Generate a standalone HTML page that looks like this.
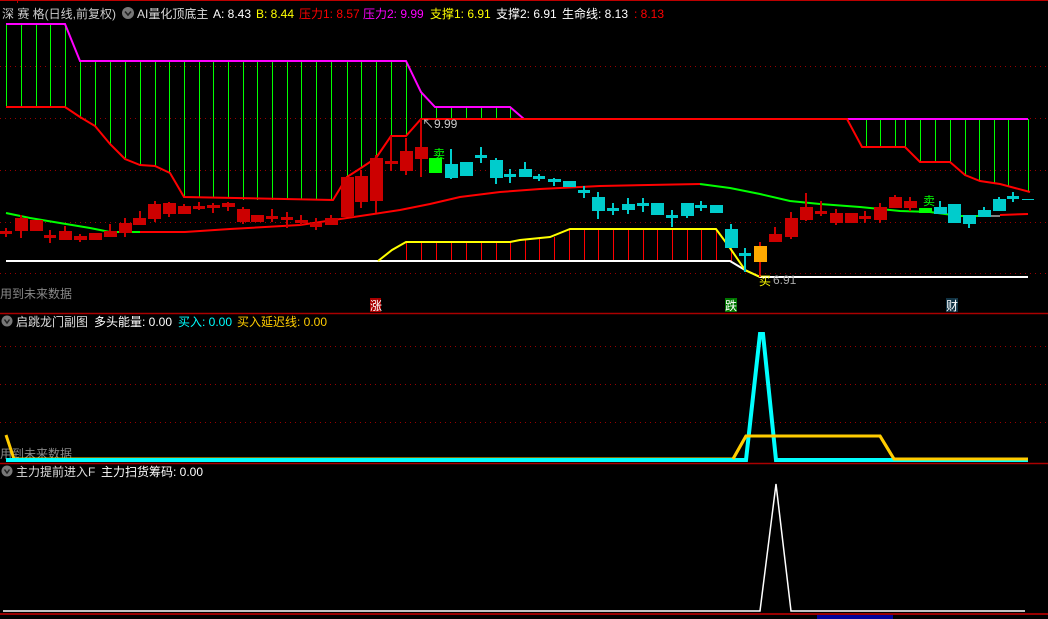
<!DOCTYPE html>
<html><head><meta charset="utf-8"><style>
html,body{margin:0;padding:0;background:#000;width:1048px;height:619px;overflow:hidden}
svg{display:block}
text{font-family:"Liberation Sans","Noto Sans CJK SC",sans-serif;font-size:12px}
</style></head><body>
<svg width="1048" height="619" xmlns="http://www.w3.org/2000/svg">
<rect width="1048" height="619" fill="#000"/>
<line x1="0" y1="0.5" x2="1048" y2="0.5" stroke="#b00" />
<line x1="17.5" y1="0" x2="17.5" y2="3" stroke="#b00"/>
<!-- grid -->
<g stroke="#900" stroke-dasharray="1,4">
<line x1="0" y1="66.5" x2="1048" y2="66.5"/><line x1="0" y1="118.5" x2="1048" y2="118.5"/>
<line x1="0" y1="170.5" x2="1048" y2="170.5"/><line x1="0" y1="222.5" x2="1048" y2="222.5"/>
<line x1="0" y1="273.5" x2="1048" y2="273.5"/>
<line x1="0" y1="346.5" x2="1048" y2="346.5"/><line x1="0" y1="384.5" x2="1048" y2="384.5"/><line x1="0" y1="422.5" x2="1048" y2="422.5"/>
</g>
<!-- green verticals -->
<g stroke="#0f0" stroke-width="1">
<line x1="6.5" y1="24" x2="6.5" y2="107"/><line x1="21.5" y1="24" x2="21.5" y2="107"/><line x1="36.5" y1="24" x2="36.5" y2="107"/><line x1="50.5" y1="24" x2="50.5" y2="107"/><line x1="65.5" y1="24" x2="65.5" y2="107"/>
<line x1="80.5" y1="61" x2="80.5" y2="117"/><line x1="95.5" y1="61" x2="95.5" y2="127"/><line x1="110.5" y1="61" x2="110.5" y2="144"/><line x1="125.5" y1="61" x2="125.5" y2="158"/><line x1="140.5" y1="61" x2="140.5" y2="165"/><line x1="155.5" y1="61" x2="155.5" y2="166"/><line x1="169.5" y1="61" x2="169.5" y2="172"/><line x1="184.5" y1="61" x2="184.5" y2="197"/><line x1="199.5" y1="61" x2="199.5" y2="197"/><line x1="213.5" y1="61" x2="213.5" y2="198"/><line x1="228.5" y1="61" x2="228.5" y2="198"/><line x1="243.5" y1="61" x2="243.5" y2="200"/><line x1="257.5" y1="61" x2="257.5" y2="200"/><line x1="272.5" y1="61" x2="272.5" y2="200"/><line x1="287.5" y1="61" x2="287.5" y2="200"/><line x1="301.5" y1="61" x2="301.5" y2="200"/><line x1="316.5" y1="61" x2="316.5" y2="200"/><line x1="331.5" y1="61" x2="331.5" y2="200"/><line x1="347.5" y1="61" x2="347.5" y2="177"/><line x1="361.5" y1="61" x2="361.5" y2="168"/><line x1="376.5" y1="61" x2="376.5" y2="158"/><line x1="391.5" y1="61" x2="391.5" y2="136"/><line x1="406.5" y1="61" x2="406.5" y2="136"/><line x1="421.5" y1="92" x2="421.5" y2="119"/>
<line x1="436.5" y1="107" x2="436.5" y2="119"/><line x1="451.5" y1="107" x2="451.5" y2="119"/><line x1="466.5" y1="107" x2="466.5" y2="119"/><line x1="481.5" y1="107" x2="481.5" y2="119"/><line x1="496.5" y1="107" x2="496.5" y2="119"/><line x1="510.5" y1="107" x2="510.5" y2="119"/>
<line x1="866.5" y1="119" x2="866.5" y2="147"/><line x1="880.5" y1="119" x2="880.5" y2="147"/><line x1="895.5" y1="119" x2="895.5" y2="147"/><line x1="905.5" y1="119" x2="905.5" y2="147"/><line x1="920.5" y1="119" x2="920.5" y2="162"/><line x1="935.5" y1="119" x2="935.5" y2="162"/><line x1="950.5" y1="119" x2="950.5" y2="162"/><line x1="965.5" y1="119" x2="965.5" y2="175"/><line x1="979.5" y1="119" x2="979.5" y2="181"/><line x1="994.5" y1="119" x2="994.5" y2="184"/><line x1="1008.5" y1="119" x2="1008.5" y2="187"/><line x1="1028.5" y1="119" x2="1028.5" y2="192"/>
</g>
<polyline fill="none" stroke="#f0f" stroke-width="2" points="6,24 65,24 80,61 406,61 421,92 435,107 510,107 524,119 1028,119"/>
<polyline fill="none" stroke="#f00" stroke-width="2" points="6,107 65,107 80,117 95,126 110,144 125,159 140,165 155,166 170,173 184,197 333,200 347,177 361,168 376,158 391,136 406,136 421,119 847,119 862,147 905,147 920,162 950,162 965,175 980,181 1000,184 1030,192"/>
<!-- support lines -->
<g stroke="#f00" stroke-width="1">
<line x1="406.5" y1="242" x2="406.5" y2="261"/><line x1="421.5" y1="242" x2="421.5" y2="261"/><line x1="436.5" y1="242" x2="436.5" y2="261"/><line x1="451.5" y1="242" x2="451.5" y2="261"/><line x1="466.5" y1="242" x2="466.5" y2="261"/><line x1="481.5" y1="242" x2="481.5" y2="261"/><line x1="496.5" y1="242" x2="496.5" y2="261"/><line x1="510.5" y1="242" x2="510.5" y2="261"/><line x1="525.5" y1="240" x2="525.5" y2="261"/><line x1="539.5" y1="238" x2="539.5" y2="261"/><line x1="554.5" y1="237" x2="554.5" y2="261"/><line x1="569.5" y1="229" x2="569.5" y2="261"/><line x1="584.5" y1="229" x2="584.5" y2="261"/><line x1="598.5" y1="229" x2="598.5" y2="261"/><line x1="613.5" y1="229" x2="613.5" y2="261"/><line x1="628.5" y1="229" x2="628.5" y2="261"/><line x1="643.5" y1="229" x2="643.5" y2="261"/><line x1="657.5" y1="229" x2="657.5" y2="261"/><line x1="672.5" y1="229" x2="672.5" y2="261"/><line x1="687.5" y1="229" x2="687.5" y2="261"/><line x1="701.5" y1="229" x2="701.5" y2="261"/><line x1="716.5" y1="229" x2="716.5" y2="261"/><line x1="731.5" y1="248" x2="731.5" y2="261"/>
</g>
<polyline fill="none" stroke="#fff" stroke-width="2" points="6,261 730,261 745,270 760,277 1028,277"/>
<polyline fill="none" stroke="#ff0" stroke-width="2" points="378,261 392,250 406,242 510,242 520,240 550,237 570,229 716,229 730,248 745,270 760,277"/>
<!-- MA line -->
<polyline fill="none" stroke="#0f0" stroke-width="2" points="6,213 30,218 60,223 90,228 110,232 140,232"/>
<polyline fill="none" stroke="#f00" stroke-width="2" points="140,232 185,232 230,229 300,225 347,218 400,210 430,204 460,197 500,192 540,189 600,186 700,184"/>
<polyline fill="none" stroke="#0f0" stroke-width="2" points="700,184 730,188 760,194 790,201 820,204 860,207 900,211 930,212 960,216 985,216"/>
<polyline fill="none" stroke="#f00" stroke-width="2" points="1000,215 1028,214"/>
<line x1="985" y1="216" x2="1000" y2="216" stroke="#fff" stroke-width="1"/>
<!-- candles -->
<g fill="#c00" stroke="#c00" stroke-width="2">
<line x1="6" y1="228" x2="6" y2="237"/><line x1="21" y1="215" x2="21" y2="238"/><line x1="50" y1="230" x2="50" y2="243"/><line x1="65" y1="226" x2="65" y2="240"/><line x1="80" y1="234" x2="80" y2="242"/><line x1="110" y1="224" x2="110" y2="237"/><line x1="125" y1="218" x2="125" y2="237"/><line x1="140" y1="211" x2="140" y2="225"/><line x1="155" y1="201" x2="155" y2="222"/><line x1="169" y1="202" x2="169" y2="217"/><line x1="184" y1="204" x2="184" y2="214"/><line x1="199" y1="202" x2="199" y2="210"/><line x1="213" y1="203" x2="213" y2="213"/><line x1="228" y1="202" x2="228" y2="211"/><line x1="243" y1="207" x2="243" y2="224"/><line x1="272" y1="209" x2="272" y2="222"/><line x1="287" y1="212" x2="287" y2="228"/><line x1="301" y1="215" x2="301" y2="225"/><line x1="316" y1="218" x2="316" y2="230"/><line x1="331" y1="215" x2="331" y2="225"/><line x1="361" y1="170" x2="361" y2="208"/><line x1="376" y1="155" x2="376" y2="213"/><line x1="391" y1="136" x2="391" y2="171"/><line x1="406" y1="138" x2="406" y2="175"/><line x1="421" y1="119" x2="421" y2="177"/>
<line x1="760" y1="242" x2="760" y2="277"/><line x1="775" y1="227" x2="775" y2="242"/><line x1="791" y1="212" x2="791" y2="239"/><line x1="806" y1="193" x2="806" y2="221"/><line x1="821" y1="201" x2="821" y2="216"/><line x1="836" y1="209" x2="836" y2="225"/><line x1="865" y1="211" x2="865" y2="223"/><line x1="880" y1="203" x2="880" y2="223"/><line x1="895" y1="195" x2="895" y2="208"/><line x1="910" y1="197" x2="910" y2="211"/>
</g>
<g fill="#c00">
<rect x="0" y="231" width="12" height="3"/><rect x="15" y="218" width="13" height="13"/><rect x="30" y="220" width="13" height="11"/><rect x="44" y="235" width="12" height="3"/><rect x="59" y="231" width="13" height="9"/><rect x="74" y="236" width="13" height="4"/><rect x="89" y="233" width="13" height="7"/><rect x="104" y="231" width="13" height="6"/><rect x="119" y="223" width="13" height="10"/><rect x="133" y="218" width="13" height="7"/><rect x="148" y="204" width="13" height="15"/><rect x="163" y="203" width="13" height="11"/><rect x="178" y="206" width="13" height="8"/><rect x="193" y="206" width="12" height="3"/><rect x="207" y="205" width="13" height="3"/><rect x="222" y="203" width="13" height="4"/><rect x="237" y="209" width="13" height="13"/><rect x="251" y="215" width="13" height="7"/><rect x="266" y="216" width="12" height="3"/><rect x="281" y="217" width="12" height="3"/><rect x="295" y="220" width="13" height="3"/><rect x="310" y="223" width="12" height="4"/><rect x="325" y="218" width="13" height="7"/><rect x="341" y="177" width="13" height="40"/><rect x="355" y="176" width="13" height="26"/><rect x="370" y="158" width="13" height="43"/><rect x="385" y="161" width="13" height="3"/><rect x="400" y="151" width="13" height="20"/><rect x="415" y="147" width="13" height="12"/>
<rect x="769" y="234" width="13" height="8"/><rect x="785" y="218" width="13" height="19"/><rect x="800" y="207" width="13" height="13"/><rect x="815" y="211" width="12" height="3"/><rect x="830" y="213" width="13" height="10"/><rect x="845" y="213" width="13" height="10"/><rect x="859" y="216" width="12" height="3"/><rect x="874" y="207" width="13" height="13"/><rect x="889" y="197" width="13" height="11"/><rect x="904" y="201" width="13" height="7"/>
</g>
<rect x="754" y="246" width="13" height="16" fill="#fa0"/>
<g fill="#0f0"><rect x="429" y="158" width="13" height="15"/><rect x="919" y="208" width="13" height="5"/></g>
<g stroke="#0cc" stroke-width="2">
<line x1="451" y1="149" x2="451" y2="179"/><line x1="481" y1="147" x2="481" y2="163"/><line x1="496" y1="158" x2="496" y2="184"/><line x1="510" y1="169" x2="510" y2="183"/><line x1="525" y1="162" x2="525" y2="177"/><line x1="539" y1="174" x2="539" y2="181"/><line x1="554" y1="178" x2="554" y2="186"/><line x1="584" y1="186" x2="584" y2="198"/><line x1="598" y1="192" x2="598" y2="219"/><line x1="613" y1="203" x2="613" y2="215"/><line x1="628" y1="198" x2="628" y2="214"/><line x1="643" y1="198" x2="643" y2="212"/><line x1="672" y1="210" x2="672" y2="227"/><line x1="687" y1="203" x2="687" y2="218"/><line x1="701" y1="201" x2="701" y2="211"/><line x1="731" y1="224" x2="731" y2="248"/><line x1="745" y1="248" x2="745" y2="272"/><line x1="940" y1="201" x2="940" y2="214"/><line x1="969" y1="215" x2="969" y2="228"/><line x1="984" y1="207" x2="984" y2="217"/><line x1="999" y1="197" x2="999" y2="211"/><line x1="1013" y1="192" x2="1013" y2="202"/>
</g>
<g fill="#0cc">
<rect x="445" y="164" width="13" height="14"/><rect x="460" y="162" width="13" height="14"/><rect x="475" y="155" width="12" height="3"/><rect x="490" y="160" width="13" height="18"/><rect x="504" y="174" width="12" height="3"/><rect x="519" y="169" width="13" height="8"/><rect x="533" y="176" width="12" height="3"/><rect x="548" y="179" width="13" height="3"/><rect x="563" y="181" width="13" height="6"/><rect x="578" y="190" width="12" height="3"/><rect x="592" y="197" width="13" height="14"/><rect x="607" y="208" width="12" height="3"/><rect x="622" y="204" width="13" height="6"/><rect x="637" y="203" width="12" height="3"/><rect x="651" y="203" width="13" height="12"/><rect x="666" y="215" width="12" height="3"/><rect x="681" y="203" width="13" height="13"/><rect x="695" y="205" width="12" height="3"/><rect x="710" y="205" width="13" height="8"/><rect x="725" y="229" width="13" height="19"/><rect x="739" y="253" width="12" height="3"/>
<rect x="934" y="207" width="13" height="7"/><rect x="948" y="204" width="13" height="19"/><rect x="963" y="215" width="13" height="9"/><rect x="978" y="210" width="13" height="7"/><rect x="993" y="199" width="13" height="12"/><rect x="1007" y="196" width="12" height="3"/><rect x="1022" y="199" width="12" height="1"/>
</g>
<!-- annotations -->
<text x="422" y="128" fill="#ccc" font-size="12">↖9.99</text>
<text x="433" y="158" fill="#0f0" font-size="12">卖</text>
<text x="923" y="205" fill="#0f0" font-size="12">卖</text>
<text x="759" y="285" fill="#ff0" font-size="12">买</text><text x="773" y="284" fill="#aaa" font-size="12">6.91</text>
<text x="0" y="298" fill="#888">用到未来数据</text>
<rect x="370" y="298" width="11" height="14" fill="#a00"/><text x="370" y="310" fill="#fff" font-size="11">涨</text>
<rect x="725" y="298" width="12" height="14" fill="#070"/><text x="725" y="310" fill="#fff" font-size="11">跌</text>
<rect x="946" y="298" width="12" height="14" fill="#134"/><text x="946" y="310" fill="#fff" font-size="11">财</text>
<!-- header -->
<text x="2" y="18" fill="#ccc" font-size="13">深 赛 格(日线,前复权)</text>
<circle cx="128" cy="13" r="6" fill="#777"/><path d="M125,11.5 L128,15 L131,11.5" stroke="#222" stroke-width="1.6" fill="none"/>
<text x="137" y="18" fill="#ddd" font-size="13">AI量化顶底主</text>
<text x="213" y="18" fill="#fff" font-size="13">A: 8.43</text>
<text x="256" y="18" fill="#ff0" font-size="13">B: 8.44</text>
<text x="299" y="18" fill="#f00" font-size="13">压力1: 8.57</text>
<text x="363" y="18" fill="#f0f" font-size="13">压力2: 9.99</text>
<text x="430" y="18" fill="#ff0" font-size="13">支撑1: 6.91</text>
<text x="496" y="18" fill="#fff" font-size="13">支撑2: 6.91</text>
<text x="562" y="18" fill="#fff" font-size="13">生命线: 8.13</text>
<text x="634" y="18" fill="#f00" font-size="13">: 8.13</text>
<!-- panel 2 -->
<line x1="0" y1="313.5" x2="1048" y2="313.5" stroke="#a00" stroke-width="1.5"/>
<circle cx="7" cy="321" r="5.5" fill="#777"/><path d="M4.5,319.5 L7,323 L9.5,319.5" stroke="#222" stroke-width="1.5" fill="none"/>
<text x="16" y="326" fill="#ddd">启跳龙门副图</text><text x="94" y="326" fill="#fff">多头能量: 0.00</text>
<text x="178" y="326" fill="#0ff">买入: 0.00</text><text x="237" y="326" fill="#fc0">买入延迟线: 0.00</text>
<text x="0" y="458" fill="#888">用到未来数据</text>
<polyline fill="none" stroke="#fc0" stroke-width="3" points="6,435 14,459 733,459 746,436 880,436 894,459 1028,459"/>
<polyline fill="none" stroke="#0ff" stroke-width="4" points="6,460 746,460 760,334 763,334 776,460 1028,460"/>
<polyline fill="none" stroke="#fc0" stroke-width="3" points="733,459 746,436 880,436 894,459 1028,459"/>
<!-- panel 3 -->
<line x1="0" y1="463.5" x2="1048" y2="463.5" stroke="#a00" stroke-width="1.5"/>
<circle cx="7" cy="471" r="5.5" fill="#777"/><path d="M4.5,469.5 L7,473 L9.5,469.5" stroke="#222" stroke-width="1.5" fill="none"/>
<text x="16" y="476" fill="#ddd">主力提前进入F</text><text x="101" y="476" fill="#fff">主力扫货筹码: 0.00</text>
<polyline fill="none" stroke="#fff" stroke-width="1.5" points="3,611 760,611 776,484 791,611 1025,611"/>
<line x1="0" y1="614" x2="1048" y2="614" stroke="#c00" stroke-width="1.5"/>
<rect x="817" y="615" width="76" height="4" fill="#009"/>
</svg>
</body></html>
